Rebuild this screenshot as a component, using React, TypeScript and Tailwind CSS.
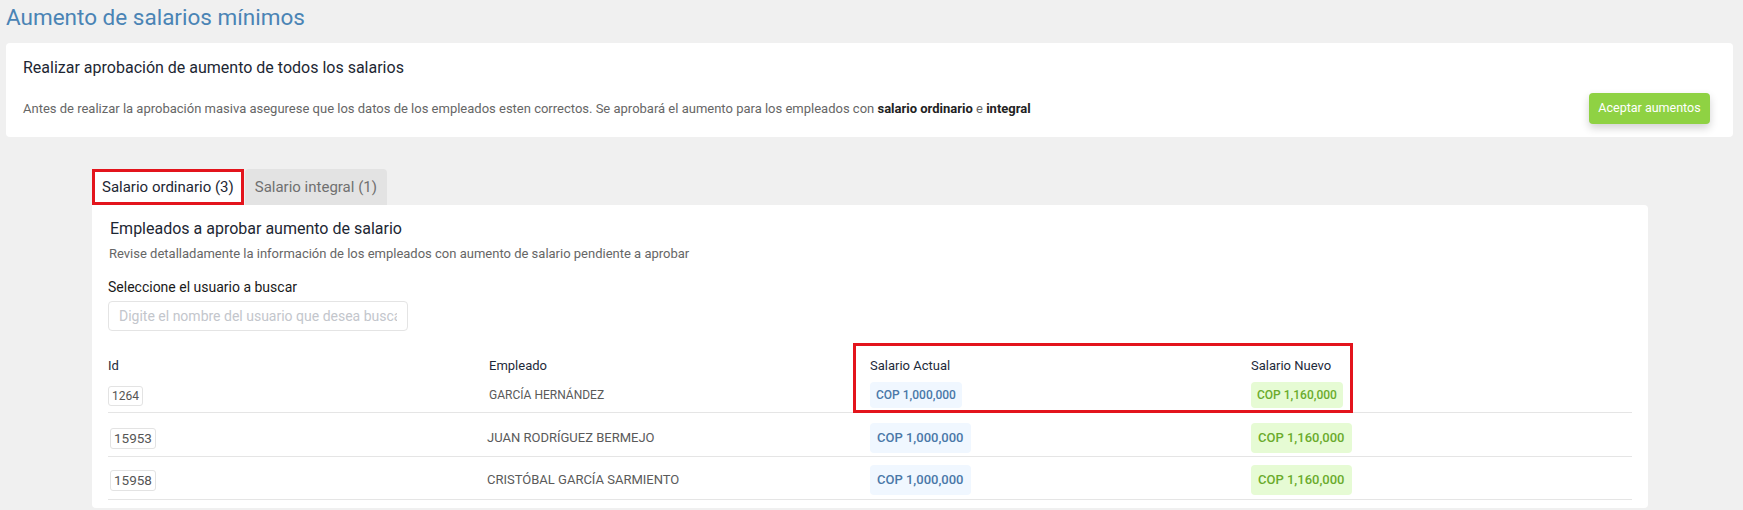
import React from 'react'

const font = { fontFamily: 'Roboto, "Noto Sans", Arial, sans-serif' }

interface Row {
  id: string
  name: string
  actual: string
  nuevo: string
  small?: boolean
}

const rows: Row[] = [
  { id: '1264', name: 'GARCÍA HERNÁNDEZ', actual: 'COP 1,000,000', nuevo: 'COP 1,160,000', small: true },
  { id: '15953', name: 'JUAN RODRÍGUEZ BERMEJO', actual: 'COP 1,000,000', nuevo: 'COP 1,160,000' },
  { id: '15958', name: 'CRISTÓBAL GARCÍA SARMIENTO', actual: 'COP 1,000,000', nuevo: 'COP 1,160,000' },
]

function TableRow({ row, index }: { row: Row; index: number }) {
  const pad = index === 0 ? 'pt-[6px] pb-[4px]' : index === 1 ? 'pt-[10px] pb-[3px]' : 'pt-[8px] pb-[4px]'
  const pill = row.small ? 'h-[26px] px-[6px] text-[12px]' : 'h-[30px] px-[7px] text-[13px]'
  return (
    <div className={`grid grid-cols-[381px_381px_381px_381px] items-center border-b border-[#e5e5e5] ${pad}`}>
      <div>
        {row.small ? (
          <span className="inline-flex items-center rounded-[3px] border border-[#e3e3e3] px-[3px] text-[12px] leading-[18px] text-[#555]">
            {row.id}
          </span>
        ) : (
          <span className="ml-[2px] inline-flex items-center rounded-[3px] border border-[#e3e3e3] px-[3px] text-[13.5px] leading-[19px] text-[#555]">
            {row.id}
          </span>
        )}
      </div>
      {row.small ? (
        <div className="uppercase text-[12px] text-[#5a5a5a]">{row.name}</div>
      ) : (
        <div className="-ml-[2px] uppercase text-[13px] text-[#5a5a5a]">{row.name}</div>
      )}
      <div>
        <span className={`inline-flex items-center rounded-[4px] bg-[#f0f7ff] font-medium text-[#4a78a8] ${pill}`}>
          {row.actual}
        </span>
      </div>
      <div>
        <span className={`inline-flex items-center rounded-[4px] bg-[#e6fbd4] font-medium text-[#6aab2c] ${pill}`}>
          {row.nuevo}
        </span>
      </div>
    </div>
  )
}

export default function App() {
  return (
    <div className="min-h-[510px] w-[1743px] bg-[#f0f0f0] pt-[4px]" style={font}>
      <h1 className="ml-[6px] text-[22.5px] leading-[26px] text-[#4a84b5]">Aumento de salarios mínimos</h1>

      <div className="ml-[6px] mt-[13px] w-[1727px] rounded-[4px] bg-white pl-[17px] pr-[23px] pt-[13px] pb-[13px]">
        <div className="text-[16px] leading-6 text-[#1d2733]">Realizar aprobación de aumento de todos los salarios</div>
        <div className="mt-[13px] flex items-center justify-between">
          <p className="text-[13px] text-[#666]">
            Antes de realizar la aprobación masiva asegurese que los datos de los empleados esten correctos. Se aprobará el
            aumento para los empleados con <b className="font-bold text-[#222]">salario ordinario</b> e{' '}
            <b className="font-bold text-[#222]">integral</b>
          </p>
          <button className="h-[31px] w-[121px] rounded-[4px] bg-[#8fd243] text-[12.5px] text-white shadow-[0_4px_8px_rgba(0,0,0,0.18)]">
            Aceptar aumentos
          </button>
        </div>
      </div>

      <div className="ml-[92px] mt-[32px] w-[1556px]">
        <div className="flex items-end">
          <div className="relative z-10 border-[3px] border-[#e3141c] bg-white px-[7px] text-[15px] leading-[30px] text-[#1d2733]">
            Salario ordinario (3)
          </div>
          <div className="ml-px rounded-t-[4px] bg-[#e3e3e3] px-[10px] text-[15px] leading-[36px] text-[#707070]">
            Salario integral (1)
          </div>
        </div>

        <div className="relative rounded-b-[4px] rounded-tr-[4px] bg-white pl-[16px] pr-[16px] pt-[12px] pb-[8px]">
          <div className="pl-[2px] text-[16px] leading-6 text-[#1d2733]">Empleados a aprobar aumento de salario</div>
          <div className="mt-[4px] pl-[1px] text-[13px] leading-[18px] text-[#666]">
            Revise detalladamente la información de los empleados con aumento de salario pendiente a aprobar
          </div>
          <div className="mt-[14px] text-[14px] leading-5 text-[#1a1a1a]">Seleccione el usuario a buscar</div>
          <input
            className="mt-[4px] h-[30px] w-[300px] rounded-[4px] border border-[#e4e4e4] px-[10px] text-[14px] text-[#333] outline-none placeholder:text-[#c3c6cc]"
            placeholder="Digite el nombre del usuario que desea buscar"
          />

          <div className="mt-[25px] w-[1524px]">
            <div className="grid grid-cols-[381px_381px_381px_381px] text-[13px] leading-5 text-[#1e2a3a]">
              <div>Id</div>
              <div>Empleado</div>
              <div>Salario Actual</div>
              <div>Salario Nuevo</div>
            </div>
            {rows.map((r, i) => (
              <TableRow key={r.id} row={r} index={i} />
            ))}
          </div>

          <div className="pointer-events-none absolute left-[761px] top-[138px] h-[70px] w-[500px] border-[3px] border-[#e3141c]" />
        </div>
      </div>
    </div>
  )
}
